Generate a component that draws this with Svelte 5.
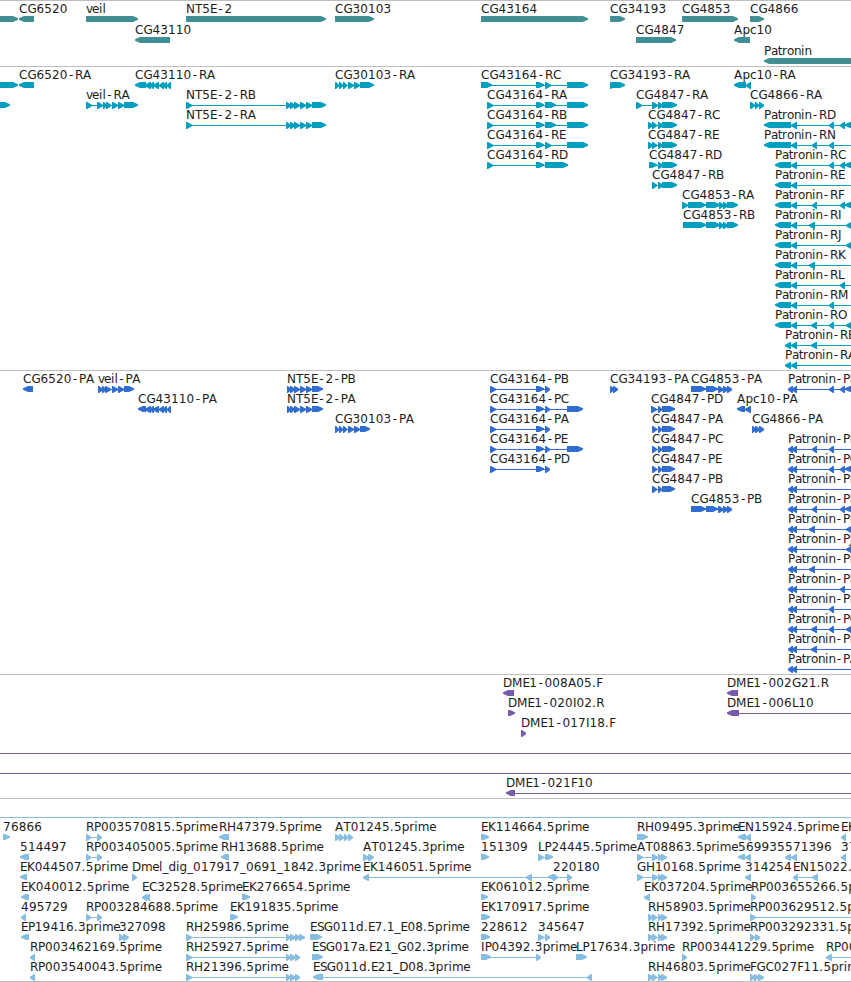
<script>
  // label advance widths in px
  const advances = {
    A: 8.4, B: 7.2, C: 8.3, D: 8.8, E: 6.8, F: 6.4, G: 9, H: 9, I: 3.6, J: 4, K: 7.9,
    L: 6.4, M: 10.5, N: 9, O: 9.3, P: 6.9, R: 8, S: 6.8, T: 7.2,
    a: 6.7, c: 6.3, d: 7.6, e: 6.9, g: 7.5, i: 3.5, l: 3.4, m: 11.3, n: 6.9, o: 7,
    p: 7.6, r: 5, t: 4.4, v: 6, '.': 4.25, '-': 7.5, _: 6
  };

  // f(row, label, direction, exons, where the intron line ends)
  const f = (row, label, dir, exons, to) => ({ row, label, dir, exons, to });

  const END = 860;
  const ntEnd = [[290, 295], [294, 300], [300, 306], [306, 312]];
  const cg30 = [[335, 339], [339, 343], [343, 347], [348, 354], [354, 360]];
  const cg48 = [[658, 663], [662, 677]];
  const cg48p = [[652, 657], [658, 662], [662, 675]];
  const cg43110 = [[145, 151], [150, 154], [153, 159], [159, 164], [163, 167], [167, 171]];
  const cg4853 = [[706, 720], [719, 724], [723, 728], [727, 738]];
  const cg4853p = [[691, 706], [706, 718], [718, 724], [723, 728], [727, 732]];
  const pbShort = [[490, 496], [536, 544], [545, 550]];
  const pbLong = [...pbShort, [567, 583]];
  const far = [[775, 791], [791, 797]];
  const near = [[785, 791], [791, 797]];
  const pp = [[788, 793], [792, 797]];
  const rp = [[86, 91], [97, 102]];
  const rh = [[186, 192], [286, 291], [290, 296], [295, 300]];
  const at = [[637, 643], [652, 658], [658, 662], [661, 667]];
  const rh58 = [[648, 653], [652, 657], [658, 662], [661, 667]];

  const tracks = [
    {
      name: 'gene', height: 66, step: 21,
      features: [
        f(0, '', 1, [[-10, 18]]),
        f(0, 'CG6520', -1, [[19, 34]]),
        f(0, 'veil', 1, [[86, 138]]),
        f(1, 'CG43110', -1, [[135, 170]]),
        f(0, 'NT5E-2', 1, [[186, 326]]),
        f(0, 'CG30103', 1, [[335, 374]]),
        f(0, 'CG43164', 1, [[481, 588]]),
        f(0, 'CG34193', 1, [[610, 625]]),
        f(1, 'CG4847', 1, [[636, 676]]),
        f(0, 'CG4853', 1, [[682, 738]]),
        f(1, 'Apc10', -1, [[734, 750]]),
        f(0, 'CG4866', 1, [[750, 764]]),
        f(2, 'Patronin', -1, [[764, END]])
      ]
    },
    {
      name: 'transcript', height: 304, step: 20,
      features: [
        f(0, '', 1, [[-10, 18]]),
        f(1, '', 1, [[-10, 10]]),
        f(0, 'CG6520-RA', -1, [[19, 34]]),
        f(1, 'veil-RA', 1, [[86, 92], [97, 103], [103, 107], [106, 111], [112, 118], [118, 124], [124, 138]]),
        f(0, 'CG43110-RA', -1, [[135, 146], ...cg43110]),
        f(1, 'NT5E-2-RB', 1, [[186, 192], [286, 291], ...ntEnd, [312, 326]]),
        f(2, 'NT5E-2-RA', 1, [[186, 192], [286, 291], ...ntEnd, [312, 326]]),
        f(0, 'CG30103-RA', 1, [...cg30, [360, 374]]),
        f(0, 'CG43164-RC', 1, [[481, 492], [536, 544], [545, 551], [567, 588]]),
        f(1, 'CG43164-RA', 1, [[487, 493], [536, 544], [545, 556], [567, 588]]),
        f(2, 'CG43164-RB', 1, [[487, 493], [536, 544], [545, 556], [567, 588]]),
        f(3, 'CG43164-RE', 1, [[487, 493], [536, 544], [545, 551], [567, 588]]),
        f(4, 'CG43164-RD', 1, [[487, 493], [536, 544], [545, 568]]),
        f(0, 'CG34193-RA', 1, [[610, 614], [612, 625]]),
        f(1, 'CG4847-RA', 1, [[636, 642], [652, 658], ...cg48]),
        f(2, 'CG4847-RC', 1, [[648, 653], [652, 657], ...cg48]),
        f(3, 'CG4847-RE', 1, [[648, 653], [652, 657], ...cg48]),
        f(4, 'CG4847-RD', 1, [[649, 657], ...cg48]),
        f(5, 'CG4847-RB', 1, [[652, 657], ...cg48]),
        f(6, 'CG4853-RA', 1, [[682, 688], [688, 706], ...cg4853]),
        f(7, 'CG4853-RB', 1, [[683, 706], ...cg4853]),
        f(0, 'Apc10-RA', -1, [[734, 746], [746, 751]]),
        f(1, 'CG4866-RA', 1, [[750, 755], [755, 759], [759, 764]]),
        f(2, 'Patronin-RD', -1, [[764, 791], [791, 797], [829, 834], [840, 845], [845, 852]], END),
        f(3, 'Patronin-RN', -1, [[764, 791], [791, 797], [812, 817], [829, 834]], END),
        f(4, 'Patronin-RC', -1, [...far, [829, 834], [840, 845], [845, 852]], END),
        f(5, 'Patronin-RE', -1, far, END),
        f(6, 'Patronin-RF', -1, [...far, [812, 817], [840, 845], [845, 852]], END),
        f(7, 'Patronin-RI', -1, [...far, [809, 815], [846, 852]], END),
        f(8, 'Patronin-RJ', -1, [...far, [846, 852]], END),
        f(9, 'Patronin-RK', -1, [...far, [809, 815]], END),
        f(10, 'Patronin-RL', -1, [...far, [840, 845]], END),
        f(11, 'Patronin-RM', -1, [...far, [829, 834]], END),
        f(12, 'Patronin-RO', -1, [...far, [811, 817], [829, 834], [846, 852]], END),
        f(13, 'Patronin-RB', -1, [...near, [811, 817]], END),
        f(14, 'Patronin-RA', -1, near, END)
      ]
    },
    {
      name: 'cds', height: 304, step: 20,
      features: [
        f(0, 'CG6520-PA', -1, [[23, 33]]),
        f(0, 'veil-PA', 1, [[98, 103], [102, 106], [105, 111], [112, 118], [118, 124], [124, 134]]),
        f(1, 'CG43110-PA', -1, [[138, 146], ...cg43110]),
        f(0, 'NT5E-2-PB', 1, [[287, 291], ...ntEnd, [312, 323]]),
        f(1, 'NT5E-2-PA', 1, [[287, 291], ...ntEnd, [312, 323]]),
        f(2, 'CG30103-PA', 1, [...cg30, [360, 370]]),
        f(0, 'CG43164-PB', 1, pbShort),
        f(1, 'CG43164-PC', 1, pbLong),
        f(2, 'CG43164-PA', 1, pbShort),
        f(3, 'CG43164-PE', 1, pbLong),
        f(4, 'CG43164-PD', 1, pbShort),
        f(0, 'CG34193-PA', 1, [[610, 614], [613, 618]]),
        f(1, 'CG4847-PD', 1, [[651, 657], [658, 662], [662, 675]]),
        f(2, 'CG4847-PA', 1, cg48p),
        f(3, 'CG4847-PC', 1, cg48p),
        f(4, 'CG4847-PE', 1, cg48p),
        f(5, 'CG4847-PB', 1, cg48p),
        f(0, 'CG4853-PA', 1, cg4853p),
        f(6, 'CG4853-PB', 1, cg4853p),
        f(1, 'Apc10-PA', -1, [[737, 745], [745, 751]]),
        f(2, 'CG4866-PA', 1, [[752, 756], [755, 760], [759, 764]]),
        f(0, 'Patronin-PD', -1, [...pp, [829, 834], [840, 845], [845, 852]], END),
        f(3, 'Patronin-PN', -1, [...pp, [812, 817], [829, 834]], END),
        f(4, 'Patronin-PC', -1, [...pp, [829, 834], [840, 845], [845, 852]], END),
        f(5, 'Patronin-PE', -1, pp, END),
        f(6, 'Patronin-PF', -1, [...pp, [812, 817], [840, 845], [845, 852]], END),
        f(7, 'Patronin-PI', -1, [...pp, [809, 815], [846, 852]], END),
        f(8, 'Patronin-PJ', -1, [...pp, [846, 852]], END),
        f(9, 'Patronin-PK', -1, [...pp, [809, 815]], END),
        f(10, 'Patronin-PL', -1, [...pp, [840, 845]], END),
        f(11, 'Patronin-PM', -1, [...pp, [829, 834]], END),
        f(12, 'Patronin-PO', -1, [...pp, [811, 817], [829, 834], [846, 852]], END),
        f(13, 'Patronin-PB', -1, [...pp, [811, 817]], END),
        f(14, 'Patronin-PA', -1, pp, END)
      ]
    },
    {
      name: 'bac', height: 124, step: 20,
      features: [
        f(0, 'DME1-008A05.F', -1, [[503, 514]]),
        f(1, 'DME1-020I02.R', 1, [[508, 515]]),
        f(2, 'DME1-017I18.F', 1, [[521, 526]]),
        f(0, 'DME1-002G21.R', -1, [[727, 738]]),
        f(1, 'DME1-006L10', -1, [[727, 739]], END),
        f(3, '', 1, [[-10, -5]], END),
        f(4, '', 1, [[-10, -5]], END),
        f(5, 'DME1-021F10', -1, [[506, 515]], END)
      ]
    },
    {
      name: 'est', height: 183, step: 20,
      features: [
        f(0, '', 1, [[-10, -5]], END),
        f(1, '76866', 1, [[3, 10]]),
        f(1, 'RP003570815.5prime', 1, rp),
        f(1, 'RH47379.5prime', -1, [[219, 229]]),
        f(1, 'AT01245.5prime', 1, [[335, 340], [339, 344], [344, 348], [348, 353]]),
        f(1, 'EK114664.5prime', 1, [[481, 489]]),
        f(1, 'RH09495.3prime', 1, [[637, 648]]),
        f(1, 'EN15924.5prime', -1, [[738, 746], [745, 751]]),
        f(1, 'EK', -1, [[841, 846]]),
        f(2, '514497', -1, [[20, 29]]),
        f(2, 'RP003405005.5prime', 1, rp),
        f(2, 'RH13688.5prime', -1, [[221, 229]]),
        f(2, 'AT01245.3prime', 1, [[363, 369], [368, 374]]),
        f(2, '151309', 1, [[481, 489]]),
        f(2, 'LP24445.5prime', 1, [[538, 544], [545, 553]]),
        f(2, 'AT08863.5prime', 1, at),
        f(2, '569935', -1, [[738, 745], [745, 751]]),
        f(2, '571396', -1, [[785, 791], [791, 797]]),
        f(2, '37', -1, [[841, 846]]),
        f(3, 'EK044507.5prime', -1, [[20, 27]]),
        f(3, 'Dmel_dig_017917_0691_1842.3prime', 1, [[132, 137]]),
        f(3, 'EK146051.5prime', -1, [[363, 369], [526, 532], [548, 555]]),
        f(3, '220180', 1, [[553, 558], [567, 572]]),
        f(3, 'GH10168.5prime', 1, at),
        f(3, '314254', -1, [[745, 751]]),
        f(3, 'EN15022.5prime', -1, [[793, 798], [812, 818]]),
        f(4, 'EK040012.5prime', -1, [[21, 29]]),
        f(4, 'EC32528.5prime', -1, [[142, 147], [145, 150]]),
        f(4, 'EK276654.5prime', 1, [[242, 250]]),
        f(4, 'EK061012.5prime', 1, [[481, 488]]),
        f(4, 'EK037204.5prime', -1, [[644, 650]]),
        f(4, 'RP003655266.5prime', 1, [[751, 756]]),
        f(5, '495729', -1, [[21, 26]]),
        f(5, 'RP003284688.5prime', 1, rp),
        f(5, 'EK191835.5prime', 1, [[230, 238]]),
        f(5, 'EK170917.5prime', 1, [[481, 490]]),
        f(5, 'RH58903.5prime', 1, rh58),
        f(5, 'RP003629512.5prime', 1, [[750, 756]], END),
        f(6, 'EP19416.3prime', -1, [[21, 29]]),
        f(6, '327098', 1, [[119, 124], [123, 129]]),
        f(6, 'RH25986.5prime', 1, [...rh, [299, 305]]),
        f(6, 'ESG011d.E7.1_E08.5prime', 1, [[310, 322]]),
        f(6, '228612', 1, [[481, 490]]),
        f(6, '345647', 1, [[538, 544], [545, 550]]),
        f(6, 'RH17392.5prime', 1, rh58),
        f(6, 'RP003292331.5prime', 1, [[750, 755], [755, 760]]),
        f(7, 'RP003462169.5prime', -1, [[30, 35]]),
        f(7, 'RH25927.5prime', 1, rh),
        f(7, 'ESG017a.E21_G02.3prime', 1, [[312, 323]]),
        f(7, 'IP04392.3prime', 1, [[481, 491], [536, 541]]),
        f(7, 'LP17634.3prime', 1, [[576, 587]]),
        f(7, 'RP003441229.5prime', 1, [[682, 687]]),
        f(7, 'RP003', -1, [[826, 832]], END),
        f(8, 'RP003540043.5prime', -1, [[30, 35]]),
        f(8, 'RH21396.5prime', 1, rh),
        f(8, 'ESG011d.E21_D08.3prime', -1, [[313, 323], [587, 592]]),
        f(8, 'RH46803.5prime', 1, rh58),
        f(8, 'FGC027F11.5prime', 1, [[750, 755], [754, 759], [758, 764]])
      ]
    }
  ];

  function letterPositions(label, start) {
    let x = start;
    const out = [];
    for (const ch of label) {
      // hyphens sit in the middle of their cell
      out.push((ch === '-' ? x + 1.4 : x).toFixed(2));
      x += advances[ch] ?? 7.8;
    }
    return out.join(' ');
  }

  // exon box with a pointed end, short exons are plain triangles
  function arrow([a, b], dir, y) {
    const short = b - a <= 6;
    const head = short ? b - a : 6;
    const top = y - 3;
    const bottom = short ? y + 4 : y + 3;
    const mid = (top + bottom) / 2;
    const tip = dir > 0 ? b : a;
    const tail = dir > 0 ? a : b;
    const neck = tip - dir * head;
    return `${tail},${top} ${neck + dir},${top} ${tip},${mid - 0.8} ${tip},${mid + 0.8} ${neck + dir},${bottom} ${tail},${bottom}`;
  }
</script>

<main class="browser">
  {#each tracks as track}
    <section class="track {track.name}">
      <svg width="851" height={track.height - 1}>
        {#each track.features as feature}
          {@const y = 18 + feature.row * track.step}
          {@const start = feature.exons[0][0]}
          {@const end = feature.to ?? feature.exons[feature.exons.length - 1][1]}
          <rect class="intron" x={start + 1} {y} width={end - start - 2} height="1" />
          {#each feature.exons as exon}
            <polygon points={arrow(exon, feature.dir, y)} />
          {/each}
          {#if feature.label}
            <text x={letterPositions(feature.label, start + 0.1)} y={y - 6}>{feature.label}</text>
          {/if}
        {/each}
      </svg>
    </section>
  {/each}
</main>

<style>
  :global(body) {
    margin: 0;
    background: #fff;
  }

  .browser {
    width: 851px;
    overflow: hidden;
    border-bottom: 1px solid #bebebe;
  }

  .track {
    border-top: 1px solid #bebebe;
  }

  svg {
    display: block;
  }

  text {
    font-family: 'DejaVu Sans', sans-serif;
    font-size: 12px;
    fill: #1c1c1c;
  }

  .intron {
    shape-rendering: crispEdges;
  }

  .gene {
    fill: #408f94;
  }

  .transcript {
    fill: #009fc0;
  }

  .cds {
    fill: #316dce;
  }

  .bac {
    fill: #775aa9;
  }

  .est {
    fill: #86bde0;
  }
</style>
